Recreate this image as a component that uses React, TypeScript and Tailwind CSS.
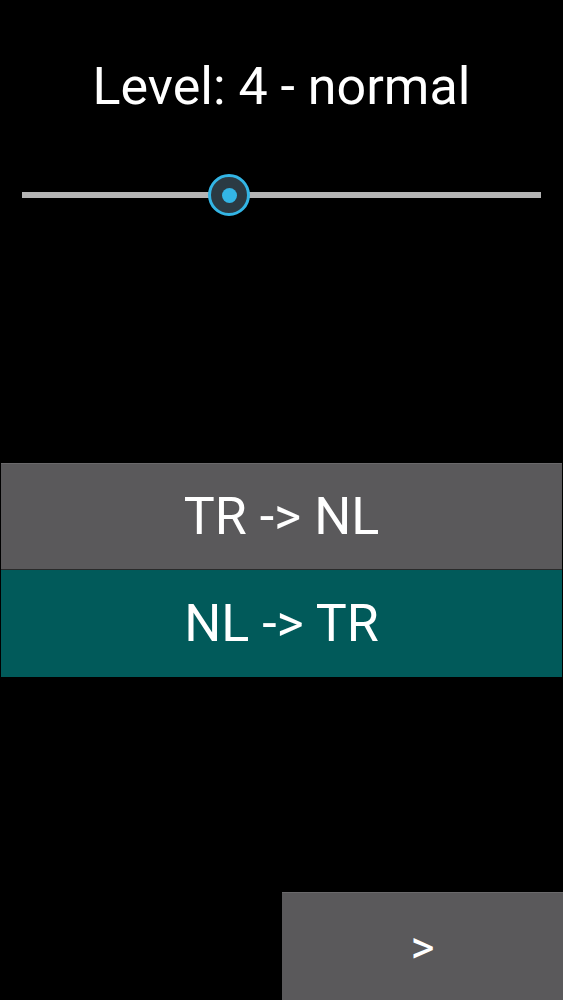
import React, { useState } from 'react';

const font = { fontFamily: 'Roboto, "Noto Sans", sans-serif' };

export default function App() {
  const [level] = useState(4);
  const [direction, setDirection] = useState<'tr-nl' | 'nl-tr'>('nl-tr');

  return (
    <div className="relative flex flex-col w-full h-[1000px] bg-black text-white overflow-hidden" style={font}>
      <h1 className="pt-[61px] text-center text-[52px] leading-none font-normal">
        Level: {level} - normal
      </h1>

      {/* seek bar */}
      <div className="relative mt-[60px] mx-[22px] h-[44px]">
        <div className="absolute left-0 right-0 top-[19px] h-[6px] bg-[#b4b4b4]" />
        <div className="absolute left-[186px] top-[1px] w-[42px] h-[42px] rounded-full border-[3px] border-[#33b5e5] bg-[#2b3a43] flex items-center justify-center">
          <div className="w-[15px] h-[15px] rounded-full bg-[#33b5e5]" />
        </div>
      </div>

      <div className="mt-[246px] flex flex-col px-px">
        <button
          onClick={() => setDirection('tr-nl')}
          className={`h-[106px] border-t border-[#6a696b] text-[52px] leading-none ${direction === 'tr-nl' ? 'bg-[#015a5a]' : 'bg-[#5a595b]'}`}
        >
          TR -&gt; NL
        </button>
        <div className="h-px bg-[#2a2a2a]" />
        <button
          onClick={() => setDirection('nl-tr')}
          className={`h-[107px] text-[52px] leading-none ${direction === 'nl-tr' ? 'bg-[#015a5a]' : 'bg-[#5a595b]'}`}
        >
          NL -&gt; TR
        </button>
      </div>

      <div className="mt-auto flex justify-end">
        <button className="w-[281px] h-[108px] bg-[#5a595b] border-t border-[#6a696b] text-[46px] leading-none">
          &gt;
        </button>
      </div>
    </div>
  );
}
